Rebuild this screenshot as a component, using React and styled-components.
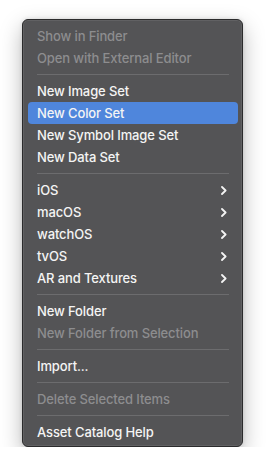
import React from "react";
import styled, { createGlobalStyle } from "styled-components";

const GlobalStyle = createGlobalStyle`
  html, body { margin: 0; padding: 0; background: #ffffff; }
  body { font-family: Inter, "Noto Sans", "Liberation Sans", sans-serif; -webkit-font-smoothing: antialiased; }
`;

const items = [
  { label: "Show in Finder", disabled: true },
  { label: "Open with External Editor", disabled: true },
  { sep: true },
  { label: "New Image Set" },
  { label: "New Color Set", active: true },
  { label: "New Symbol Image Set" },
  { label: "New Data Set" },
  { sep: true },
  { label: "iOS", sub: true },
  { label: "macOS", sub: true },
  { label: "watchOS", sub: true },
  { label: "tvOS", sub: true },
  { label: "AR and Textures", sub: true },
  { sep: true },
  { label: "New Folder" },
  { label: "New Folder from Selection", disabled: true },
  { sep: true },
  { label: "Import..." },
  { sep: true },
  { label: "Delete Selected Items", disabled: true },
  { sep: true },
  { label: "Asset Catalog Help" },
];

const Chevron = () => (
  <svg width="6" height="9" viewBox="0 0 6 9">
    <path d="M1 1 L4.6 4.5 L1 8" fill="none" stroke="#f4f4f4" strokeWidth="1.8" strokeLinecap="round" strokeLinejoin="round" />
  </svg>
);

export default function App() {
  return (
    <>
      <GlobalStyle />
      <Page>
        <Menu>
          {items.map((it, i) =>
            it.sep ? (
              <Separator key={i} />
            ) : (
              <Item key={i} $active={it.active} $disabled={it.disabled}>
                <Label>{it.label}</Label>
                {it.sub && <Chevron />}
              </Item>
            )
          )}
        </Menu>
      </Page>
    </>
  );
}

const Page = styled.div`
  padding: 19px 0 0 22px;
`;

const Menu = styled.div`
  width: 219px;
  padding: 5px 0 3px;
  background: #545456;
  border: 1px solid #2b2b2c;
  border-radius: 6px;
  box-shadow: inset 0 0 0 1px rgba(255,255,255,0.08), 0 8px 22px rgba(0,0,0,0.28), 0 0 4px rgba(0,0,0,0.12);
  display: flex;
  flex-direction: column;
`;

const Item = styled.div`
  height: 22px;
  margin: 0 4px 0 5px;
  padding: 0 11px 0 9px;
  border-radius: 4px;
  display: flex;
  align-items: center;
  justify-content: space-between;
  font-size: 13px;
  font-weight: 500;
  letter-spacing: -0.12px;
  color: ${p => (p.$disabled ? "#8d8d8f" : "#f4f4f4")};
  background: ${p => (p.$active ? "#4f86dc" : "transparent")};
`;

const Label = styled.span`
  white-space: nowrap;
`;

const Separator = styled.div`
  height: 1px;
  margin: 5px 13px 5px 14px;
  background: #6c6c6e;
`;
